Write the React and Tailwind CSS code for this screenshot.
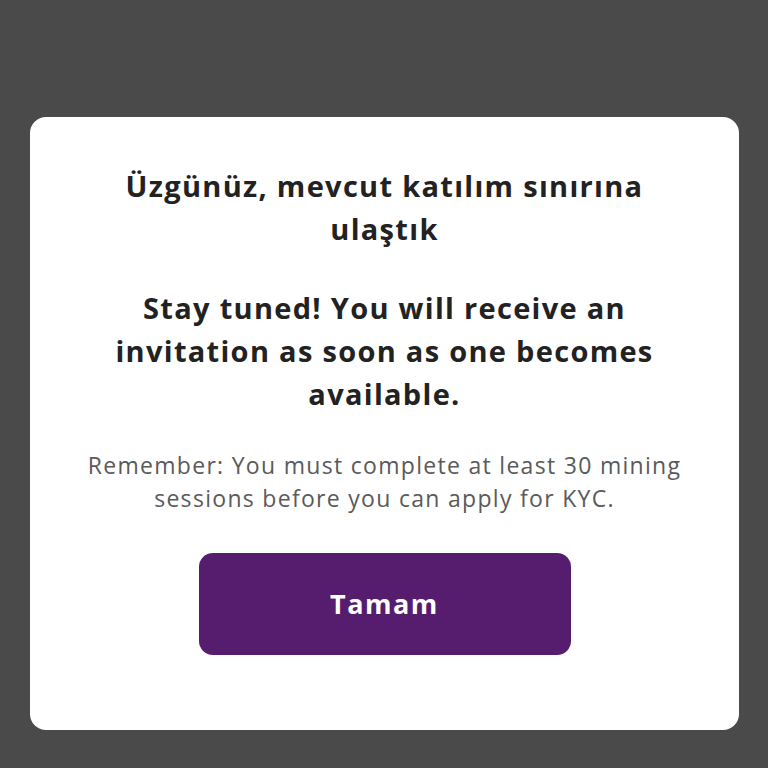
export default function App() {
  return (
    <div className="min-h-[768px] w-full bg-[#4a4a4a] pt-[117px] px-[30px] pb-[38px] font-['Open_Sans','Noto_Sans',sans-serif]">
      <div className="w-[709px] h-[613px] bg-white rounded-[16px] pt-[47px] px-[10px] flex flex-col items-center text-center">
        <h1 className="text-[29px] leading-[43px] font-bold tracking-[1.3px] text-[#222]">
          Üzgünüz, mevcut katılım sınırına
          <br />
          ulaştık
        </h1>
        <h2 className="mt-[36px] text-[29px] leading-[43px] font-bold tracking-[1.3px] text-[#222]">
          Stay tuned! You will receive an
          <br />
          invitation as soon as one becomes
          <br />
          available.
        </h2>
        <p className="mt-[34px] text-[23px] leading-[33px] tracking-[1.3px] text-[#5a5a5a]">
          Remember: You must complete at least 30 mining
          <br />
          sessions before you can apply for KYC.
        </p>
        <button className="mt-[38px] w-[372px] h-[102px] rounded-[14px] bg-[#561c6e] text-white text-[27px] font-bold tracking-[1.5px]">
          Tamam
        </button>
      </div>
    </div>
  );
}
